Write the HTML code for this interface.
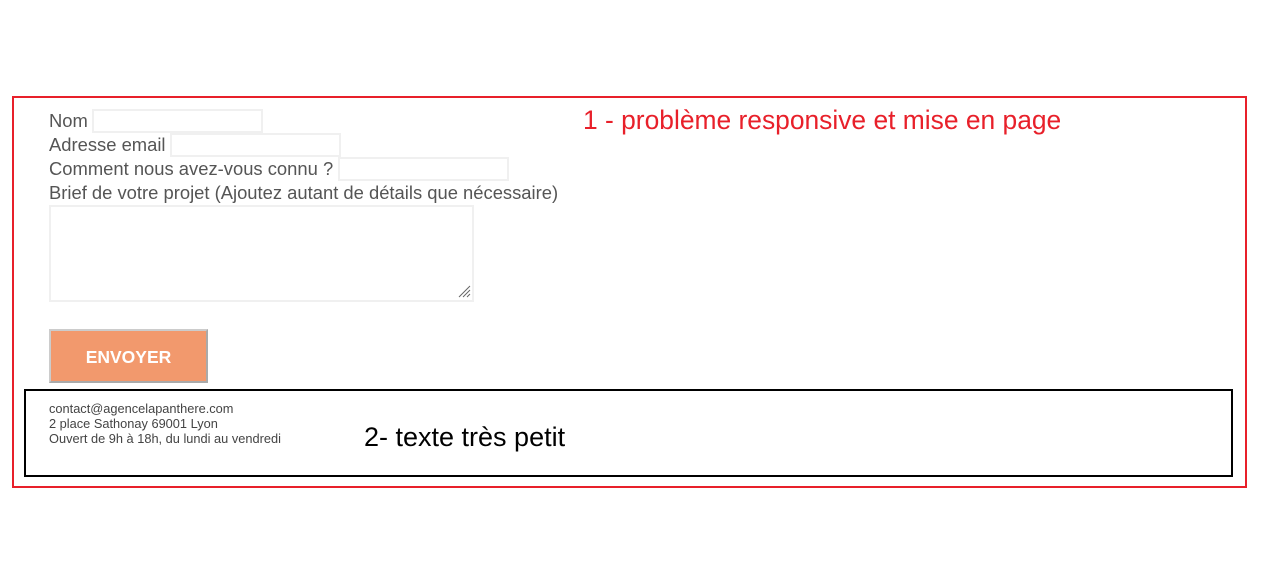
<!DOCTYPE html>
<html><head><meta charset="utf-8"><style>
body{margin:0;width:1263px;height:569px;background:#fff;position:relative;font-family:"Liberation Sans",Arial,sans-serif;overflow:hidden}
.abs{position:absolute}
.red{left:12px;top:96px;width:1231px;height:388px;border:2px solid #e8202a}
.blk{left:24px;top:389px;width:1205px;height:84px;border:2px solid #000}
.lbl{font-size:18.4px;color:#555;white-space:nowrap;line-height:20px}
.inp{border:2px solid #f0f0f0;background:#fff;box-sizing:border-box}
.btn{left:49px;top:329px;width:159px;height:54px;background:#f2996d;border:2px solid #aaa;border-top-color:#ccc;border-left-color:#ccc;box-sizing:border-box;color:#fff;font-weight:bold;font-size:17.5px;text-align:center;line-height:52px}
.ft{left:49px;top:401px;font-size:12.8px;line-height:15px;color:#444}
</style></head><body>
<div class="abs red"></div>
<div class="abs lbl" style="left:49px;top:111px">Nom</div>
<div class="abs inp" style="left:92px;top:109px;width:171px;height:24px"></div>
<div class="abs lbl" style="left:49px;top:135px">Adresse email</div>
<div class="abs inp" style="left:170px;top:133px;width:171px;height:24px"></div>
<div class="abs lbl" style="left:49px;top:159px">Comment nous avez-vous connu ?</div>
<div class="abs inp" style="left:338px;top:157px;width:171px;height:24px"></div>
<div class="abs lbl" style="left:49px;top:183px">Brief de votre projet (Ajoutez autant de détails que nécessaire)</div>
<div class="abs inp" style="left:49px;top:205px;width:425px;height:97px"></div>
<svg class="abs" style="left:457px;top:284px" width="14" height="14"><path d="M13 2L2 13M13 6L6 13M13 10L10 13" stroke="#666" stroke-width="1"/></svg>
<div class="abs btn">ENVOYER</div>
<div class="abs" style="left:583px;top:105px;font-size:26.4px;color:#e8202a;white-space:nowrap">1 - problème responsive et mise en page</div>
<div class="abs blk"></div>
<div class="abs ft">contact@agencelapanthere.com<br>2 place Sathonay 69001 Lyon<br>Ouvert de 9h à 18h, du lundi au vendredi</div>
<div class="abs" style="left:364px;top:422px;font-size:27px;color:#000;white-space:nowrap">2- texte très petit</div>
</body></html>
